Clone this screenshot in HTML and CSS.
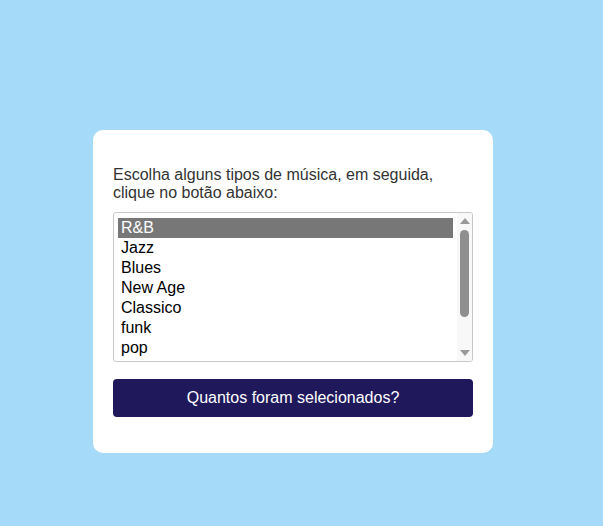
FILE: index.html
```html
<!DOCTYPE html>
<html lang="pt">
<head>
<meta charset="utf-8">
<title>Tipos de música</title>
<link rel="stylesheet" href="styles.css">
</head>
<body>
<main class="page">
  <form class="card">
    <p class="prompt">Escolha alguns tipos de música, em seguida, clique no botão abaixo:</p>
    <div class="listbox" role="listbox" aria-multiselectable="true">
      <ul class="options">
        <li class="option selected" role="option" aria-selected="true">R&amp;B</li>
        <li class="option" role="option">Jazz</li>
        <li class="option" role="option">Blues</li>
        <li class="option" role="option">New Age</li>
        <li class="option" role="option">Classico</li>
        <li class="option" role="option">funk</li>
        <li class="option" role="option">pop</li>
      </ul>
      <div class="scrollbar" aria-hidden="true">
        <span class="arrow up"></span>
        <span class="thumb"></span>
        <span class="track-rest"></span>
        <span class="arrow down"></span>
      </div>
    </div>
    <button type="button" class="btn">Quantos foram selecionados?</button>
  </form>
</main>
</body>
</html>
```

FILE: styles.css
```css
html, body {
  margin: 0;
  padding: 0;
}
body {
  background: #a5dbf9;
  font-family: "Liberation Sans", Arial, sans-serif;
  min-height: 526px;
}
.page {
  display: flex;
  justify-content: center;
  padding-top: 130px;
  padding-right: 17px;
}
.card {
  width: 360px;
  background: #fff;
  border-radius: 10px;
  padding: 20px 20px 36px;
  display: flex;
  flex-direction: column;
}
.prompt {
  margin: 16px 0 10px;
  font-size: 16px;
  line-height: 18px;
  color: #333;
}
.listbox {
  display: flex;
  height: 150px;
  box-sizing: border-box;
  border: 1px solid #c8c8c8;
  border-radius: 3px;
  overflow: hidden;
}
.options {
  flex: 1;
  list-style: none;
  margin: 0;
  padding: 5px 4px 0 4px;
  font-size: 16px;
  color: #000;
}
.option {
  height: 20px;
  line-height: 20px;
  padding: 0 3px;
}
.option.selected {
  background: #777;
  color: #fff;
}
.scrollbar {
  width: 15px;
  background: #f8f8f8;
  display: flex;
  flex-direction: column;
  align-items: center;
}
.arrow {
  height: 16px;
  width: 15px;
  display: flex;
  align-items: center;
  justify-content: center;
}
.arrow::before {
  content: "";
  width: 0;
  height: 0;
  border-left: 5px solid transparent;
  border-right: 5px solid transparent;
}
.arrow.up::before {
  border-bottom: 6px solid #999;
}
.arrow.down::before {
  border-top: 6px solid #999;
}
.thumb {
  width: 9px;
  height: 87px;
  margin-top: 1px;
  border-radius: 5px;
  background: #8f8f8f;
}
.track-rest {
  flex: 1;
}
.btn {
  margin-top: 17px;
  height: 38px;
  border: none;
  border-radius: 4px;
  background: #1f195c;
  color: #fff;
  font-family: "Liberation Sans", Arial, sans-serif;
  font-size: 16px;
  cursor: pointer;
}
```
